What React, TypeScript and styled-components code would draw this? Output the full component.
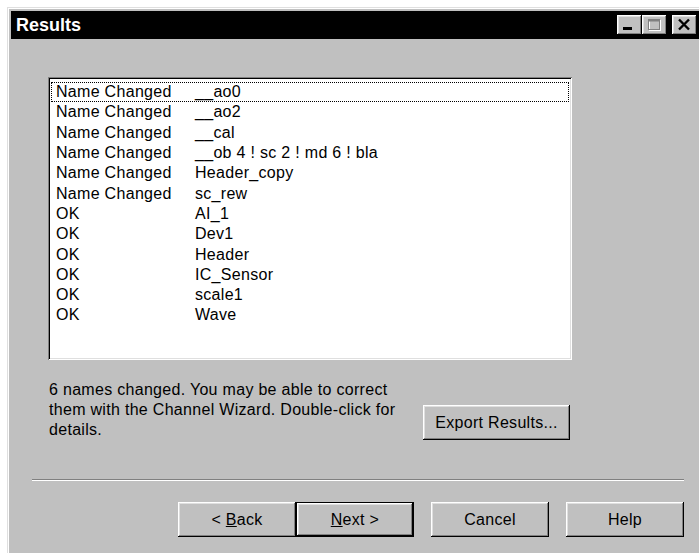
import React from 'react';
import styled, { createGlobalStyle } from 'styled-components';

const GlobalStyle = createGlobalStyle`
  html, body {
    margin: 0;
    padding: 0;
    background: #fff;
    overflow: hidden;
  }
  body {
    font-family: 'Liberation Sans', Arial, sans-serif;
  }
`;

const raised = `
  box-shadow:
    inset -1px -1px #000,
    inset 1px 1px #fff,
    inset -2px -2px #808080,
    inset 2px 2px #dfdfdf;
`;

const Window = styled.div`
  margin: 7px 0 0 7px;
  width: 696px;
  height: 560px;
  box-sizing: border-box;
  padding: 4px;
  background: #c0c0c0;
  display: flex;
  flex-direction: column;
  box-shadow:
    inset 1px 1px #dfdfdf,
    inset 2px 2px #fff,
    inset -1px -1px #000,
    inset -2px -2px #808080;
`;

const TitleBar = styled.div`
  height: 28px;
  flex-shrink: 0;
  background: #000;
  display: flex;
  align-items: center;
  padding: 0 2px 0 5px;
`;

const TitleText = styled.div`
  flex: 1;
  color: #fff;
  font-weight: bold;
  font-size: 18px;
`;

const CaptionButton = styled.div<{ $gap?: number }>`
  width: 25px;
  height: 20px;
  margin-left: ${p => p.$gap ?? 0}px;
  background: #c0c0c0;
  display: flex;
  align-items: center;
  justify-content: center;
  ${raised}
`;

const Content = styled.div`
  padding: 38px 0 0 37px;
  font-size: 16px;
  letter-spacing: 0.3px;
  color: #000;
`;

const ListBox = styled.div`
  width: 524px;
  height: 283px;
  box-sizing: border-box;
  padding: 5px 2px 2px 2px;
  background: #fff;
  box-shadow:
    inset 1px 1px #808080,
    inset -1px -1px #fff,
    inset 2px 2px #000,
    inset -2px -2px #dfdfdf;
`;

const Row = styled.div<{ $focused?: boolean }>`
  height: 20.3px;
  box-sizing: border-box;
  margin: 0 1px;
  padding-left: 4px;
  display: flex;
  align-items: center;
  white-space: pre;
  border: 1px dotted ${p => (p.$focused ? '#000' : 'transparent')};
`;

const StatusCell = styled.span`
  width: 139px;
  flex-shrink: 0;
`;

const InfoRow = styled.div`
  margin-top: 20px;
  display: flex;
  align-items: flex-start;
`;

const InfoText = styled.div`
  width: 374px;
  padding-left: 1px;
  line-height: 20px;
`;

const Button = styled.div<{ $width: number; $gap?: number; $default?: boolean }>`
  width: ${p => p.$width}px;
  height: 35px;
  margin-left: ${p => p.$gap ?? 0}px;
  box-sizing: border-box;
  background: #c0c0c0;
  display: flex;
  align-items: center;
  justify-content: center;
  font-size: 16px;
  letter-spacing: 0.3px;
  white-space: pre;
  border: ${p => (p.$default ? '1px solid #000' : 'none')};
  ${raised}
`;

const ExportButton = styled(Button)`
  margin-top: 25px;
`;

const Separator = styled.div`
  margin: 39px 15px 0 21px;
  border-top: 1px solid #808080;
  border-bottom: 1px solid #fff;
`;

const ButtonRow = styled.div`
  margin-top: 21px;
  padding-right: 15px;
  display: flex;
  justify-content: flex-end;
`;

const results = [
  ['Name Changed', '__ao0'],
  ['Name Changed', '__ao2'],
  ['Name Changed', '__cal'],
  ['Name Changed', '__ob 4 ! sc 2 ! md 6 ! bla'],
  ['Name Changed', 'Header_copy'],
  ['Name Changed', 'sc_rew'],
  ['OK', 'AI_1'],
  ['OK', 'Dev1'],
  ['OK', 'Header'],
  ['OK', 'IC_Sensor'],
  ['OK', 'scale1'],
  ['OK', 'Wave'],
];

const App = () => (
  <>
    <GlobalStyle />
    <Window>
      <TitleBar>
        <TitleText>Results</TitleText>
        <CaptionButton>
          <svg width="25" height="20" viewBox="0 0 25 20">
            <rect x="6" y="12" width="9" height="3" fill="#000" />
          </svg>
        </CaptionButton>
        <CaptionButton>
          <svg width="25" height="20" viewBox="0 0 25 20">
            <rect x="7.5" y="5.5" width="11" height="10" fill="none" stroke="#fff" />
            <rect x="6.5" y="4.5" width="11" height="10" fill="none" stroke="#808080" />
            <rect x="6.5" y="4.5" width="11" height="2" fill="#808080" />
          </svg>
        </CaptionButton>
        <CaptionButton $gap={5}>
          <svg width="25" height="20" viewBox="0 0 25 20">
            <path d="M7 4.5 L17 14.5 M17 4.5 L7 14.5" stroke="#000" strokeWidth="2.4" />
          </svg>
        </CaptionButton>
      </TitleBar>

      <Content>
        <ListBox>
          {results.map(([status, name], i) => (
            <Row key={i} $focused={i === 0}>
              <StatusCell>{status}</StatusCell>
              <span>{name}</span>
            </Row>
          ))}
        </ListBox>

        <InfoRow>
          <InfoText>
            6 names changed. You may be able to correct
            <br />
            them with the Channel Wizard. Double-click for
            <br />
            details.
          </InfoText>
          <ExportButton $width={147}>Export Results...</ExportButton>
        </InfoRow>
      </Content>

      <Separator />

      <ButtonRow>
        <Button $width={118}>
          <span>
            &lt; <u>B</u>ack
          </span>
        </Button>
        <Button $width={118} $default>
          <span>
            <u>N</u>ext &gt;
          </span>
        </Button>
        <Button $width={118} $gap={17}>
          Cancel
        </Button>
        <Button $width={118} $gap={17}>
          Help
        </Button>
      </ButtonRow>
    </Window>
  </>
);

export default App;
